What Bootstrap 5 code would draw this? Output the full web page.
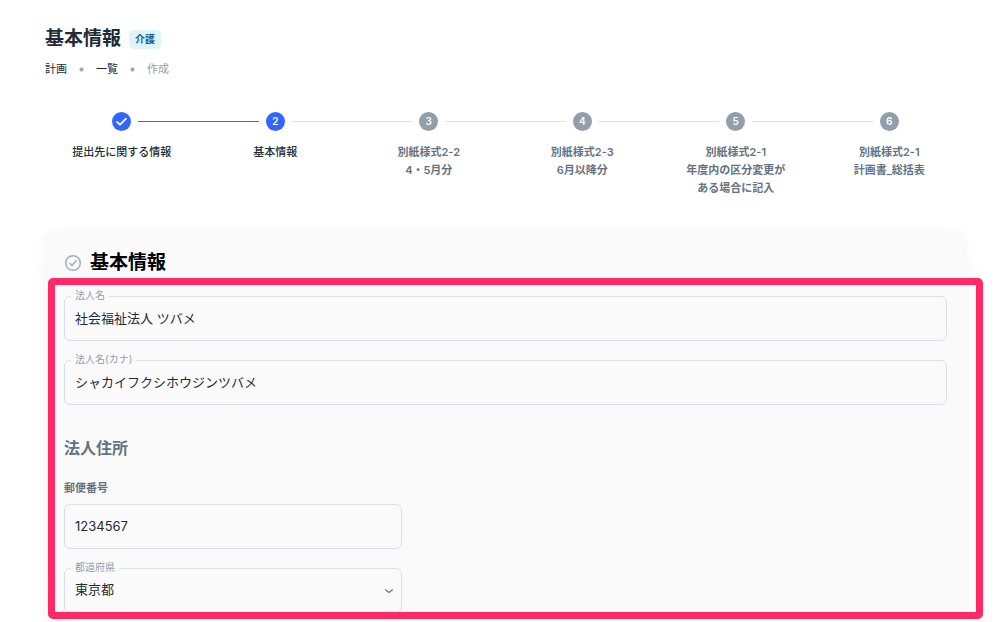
<!DOCTYPE html>
<html lang="ja">
<head>
<meta charset="utf-8">
<meta name="viewport" content="width=device-width, initial-scale=1">
<title>基本情報</title>
<link href="https://cdn.jsdelivr.net/npm/bootstrap@5.3.0/dist/css/bootstrap.min.css" rel="stylesheet">
<style>
  :root { --ink: #212b36; --muted: #637381; --faint: #919eab; --blue: #3366ff; --panel: #fafafb; --hot: #ff2966; }
  body { font-family: Inter, "Noto Sans CJK JP", sans-serif; font-size: 13px; line-height: 20px; color: var(--ink); background: #fff; }
  .page-area { padding: 25px 33px 0 44px; }
  .page-area header { padding-left: 1px; }
  .page-title { font-size: 19px; line-height: 28px; font-weight: 700; }
  .kind-tag { background: #dff3fa; color: #1b5f8f; font-size: 10px; line-height: 19px; padding: 0 6px; border-radius: 5px; font-weight: 700; }
  .crumbs { font-size: 11px; line-height: 18px; margin-top: 7px; gap: 12px; }
  .crumbs a { color: var(--ink); text-decoration: none; }
  .crumbs .dot { width: 5px; height: 5px; background: var(--faint); border: 1px solid #d5dae0; }
  .crumbs .here { color: var(--faint); }
  .stepper { margin-top: 34px; padding: 0 1px; font-size: 11px; line-height: 18px; font-weight: 600; color: var(--muted); }
  .stepper li { flex: 1 1 0; }
  .rail { height: 1px; background: #dfe3e8; }
  .rail.filled { background: var(--blue); }
  .rail.off { background: transparent; }
  .bubble { width: 19px; height: 19px; margin: 0 7px; background: var(--faint); color: #fff; font-size: 10px; line-height: 19px; font-weight: 600; }
  .reached .bubble { background: var(--blue); }
  .reached { color: var(--ink); font-weight: 500; }
  .step-name { margin-top: 12px; }
  .panel { margin-top: 32px; background: var(--panel); border-radius: 13px; padding: 20px; box-shadow: 0 0 1px rgba(145,158,171,.15), 0 10px 20px -4px rgba(145,158,171,.12); }
  .panel-title { font-size: 19px; line-height: 28px; font-weight: 700; color: #000; }
  .marked { margin-top: 19px; }
  .marked::after { content: ""; position: absolute; inset: -18px -36px -6px -16px; border: 7px solid var(--hot); border-radius: 5px; pointer-events: none; }
  .field { position: relative; margin-bottom: 19px; }
  .field label { position: absolute; top: -10px; left: 7px; padding: 0 4px; font-size: 10px; line-height: 18px; color: var(--faint); background: var(--panel); }
  .field .form-control, .field .form-select { height: 45px; padding: 0 10px 2px; font-size: 13px; color: var(--ink); background-color: transparent; border: 1px solid #dcdfe4; border-radius: 6px; }
  .field .form-select { background-image: url("data:image/svg+xml,%3Csvg xmlns='http://www.w3.org/2000/svg' viewBox='0 0 10 10'%3E%3Cpath d='M1.5 3.8L5 6.5L8.5 3.8' fill='none' stroke='%23637381' stroke-width='1.1' stroke-linecap='round' stroke-linejoin='round'/%3E%3C/svg%3E"); background-size: 10px; background-position: right 7px center; }
  .narrow { max-width: 338px; }
  .sub-title { font-size: 16px; line-height: 24px; font-weight: 700; color: var(--muted); margin: 31px 0 19px; }
  .plain-label { display: block; font-size: 11px; line-height: 18px; font-weight: 600; color: var(--muted); margin-bottom: 7px; }
</style>
</head>
<body class="vh-100 overflow-hidden">
<main class="page-area">
  <header>
    <div class="d-flex align-items-center">
      <h1 class="page-title mb-0 me-2">基本情報</h1>
      <span class="kind-tag">介護</span>
    </div>
    <nav aria-label="パンくず" class="crumbs d-flex align-items-center">
      <a href="#">計画</a><span class="dot rounded-circle"></span>
      <a href="#">一覧</a><span class="dot rounded-circle"></span>
      <span class="here">作成</span>
    </nav>
  </header>

  <ol class="stepper list-unstyled d-flex text-center mb-0">
    <li class="reached">
      <div class="d-flex align-items-center"><span class="rail off flex-fill"></span>
        <span class="bubble rounded-circle d-flex align-items-center justify-content-center"><svg width="13" height="13" viewBox="0 0 13 13" fill="none" stroke="#fff" stroke-width="1.7" stroke-linecap="round" stroke-linejoin="round" aria-hidden="true"><path d="M2 6.8L5 9.7L11 3.6"/></svg></span>
        <span class="rail filled flex-fill"></span></div>
      <div class="step-name">提出先に関する情報</div>
    </li>
    <li class="reached">
      <div class="d-flex align-items-center"><span class="rail filled flex-fill"></span><span class="bubble rounded-circle">2</span><span class="rail flex-fill"></span></div>
      <div class="step-name">基本情報</div>
    </li>
    <li>
      <div class="d-flex align-items-center"><span class="rail flex-fill"></span><span class="bubble rounded-circle">3</span><span class="rail flex-fill"></span></div>
      <div class="step-name">別紙様式2-2<br>4・5月分</div>
    </li>
    <li>
      <div class="d-flex align-items-center"><span class="rail flex-fill"></span><span class="bubble rounded-circle">4</span><span class="rail flex-fill"></span></div>
      <div class="step-name">別紙様式2-3<br>6月以降分</div>
    </li>
    <li>
      <div class="d-flex align-items-center"><span class="rail flex-fill"></span><span class="bubble rounded-circle">5</span><span class="rail flex-fill"></span></div>
      <div class="step-name">別紙様式2-1<br>年度内の区分変更が<br>ある場合に記入</div>
    </li>
    <li>
      <div class="d-flex align-items-center"><span class="rail flex-fill"></span><span class="bubble rounded-circle">6</span><span class="rail off flex-fill"></span></div>
      <div class="step-name">別紙様式2-1<br>計画書_総括表</div>
    </li>
  </ol>

  <section class="panel">
    <div class="d-flex align-items-center gap-2">
      <svg width="18" height="18" viewBox="0 0 18 18" fill="none" stroke="#a3adb8" stroke-width="1.5" stroke-linecap="round" stroke-linejoin="round" aria-hidden="true"><circle cx="9" cy="9" r="7.3"/><path d="M5.8 9.3L8 11.5L12.2 6.8"/></svg>
      <h2 class="panel-title mb-0">基本情報</h2>
    </div>
    <form class="marked position-relative">
      <div class="field">
        <input id="corp" class="form-control" type="text" value="社会福祉法人 ツバメ">
        <label for="corp">法人名</label>
      </div>
      <div class="field">
        <input id="kana" class="form-control" type="text" value="シャカイフクシホウジンツバメ">
        <label for="kana">法人名(カナ)</label>
      </div>
      <h3 class="sub-title">法人住所</h3>
      <label class="plain-label" for="zip">郵便番号</label>
      <div class="field narrow">
        <input id="zip" class="form-control" type="text" value="1234567">
      </div>
      <div class="field narrow mb-0">
        <select id="pref" class="form-select"><option selected>東京都</option></select>
        <label for="pref">都道府県</label>
      </div>
    </form>
  </section>
</main>
<script src="https://cdn.jsdelivr.net/npm/bootstrap@5.3.0/dist/js/bootstrap.bundle.min.js"></script>
</body>
</html>
